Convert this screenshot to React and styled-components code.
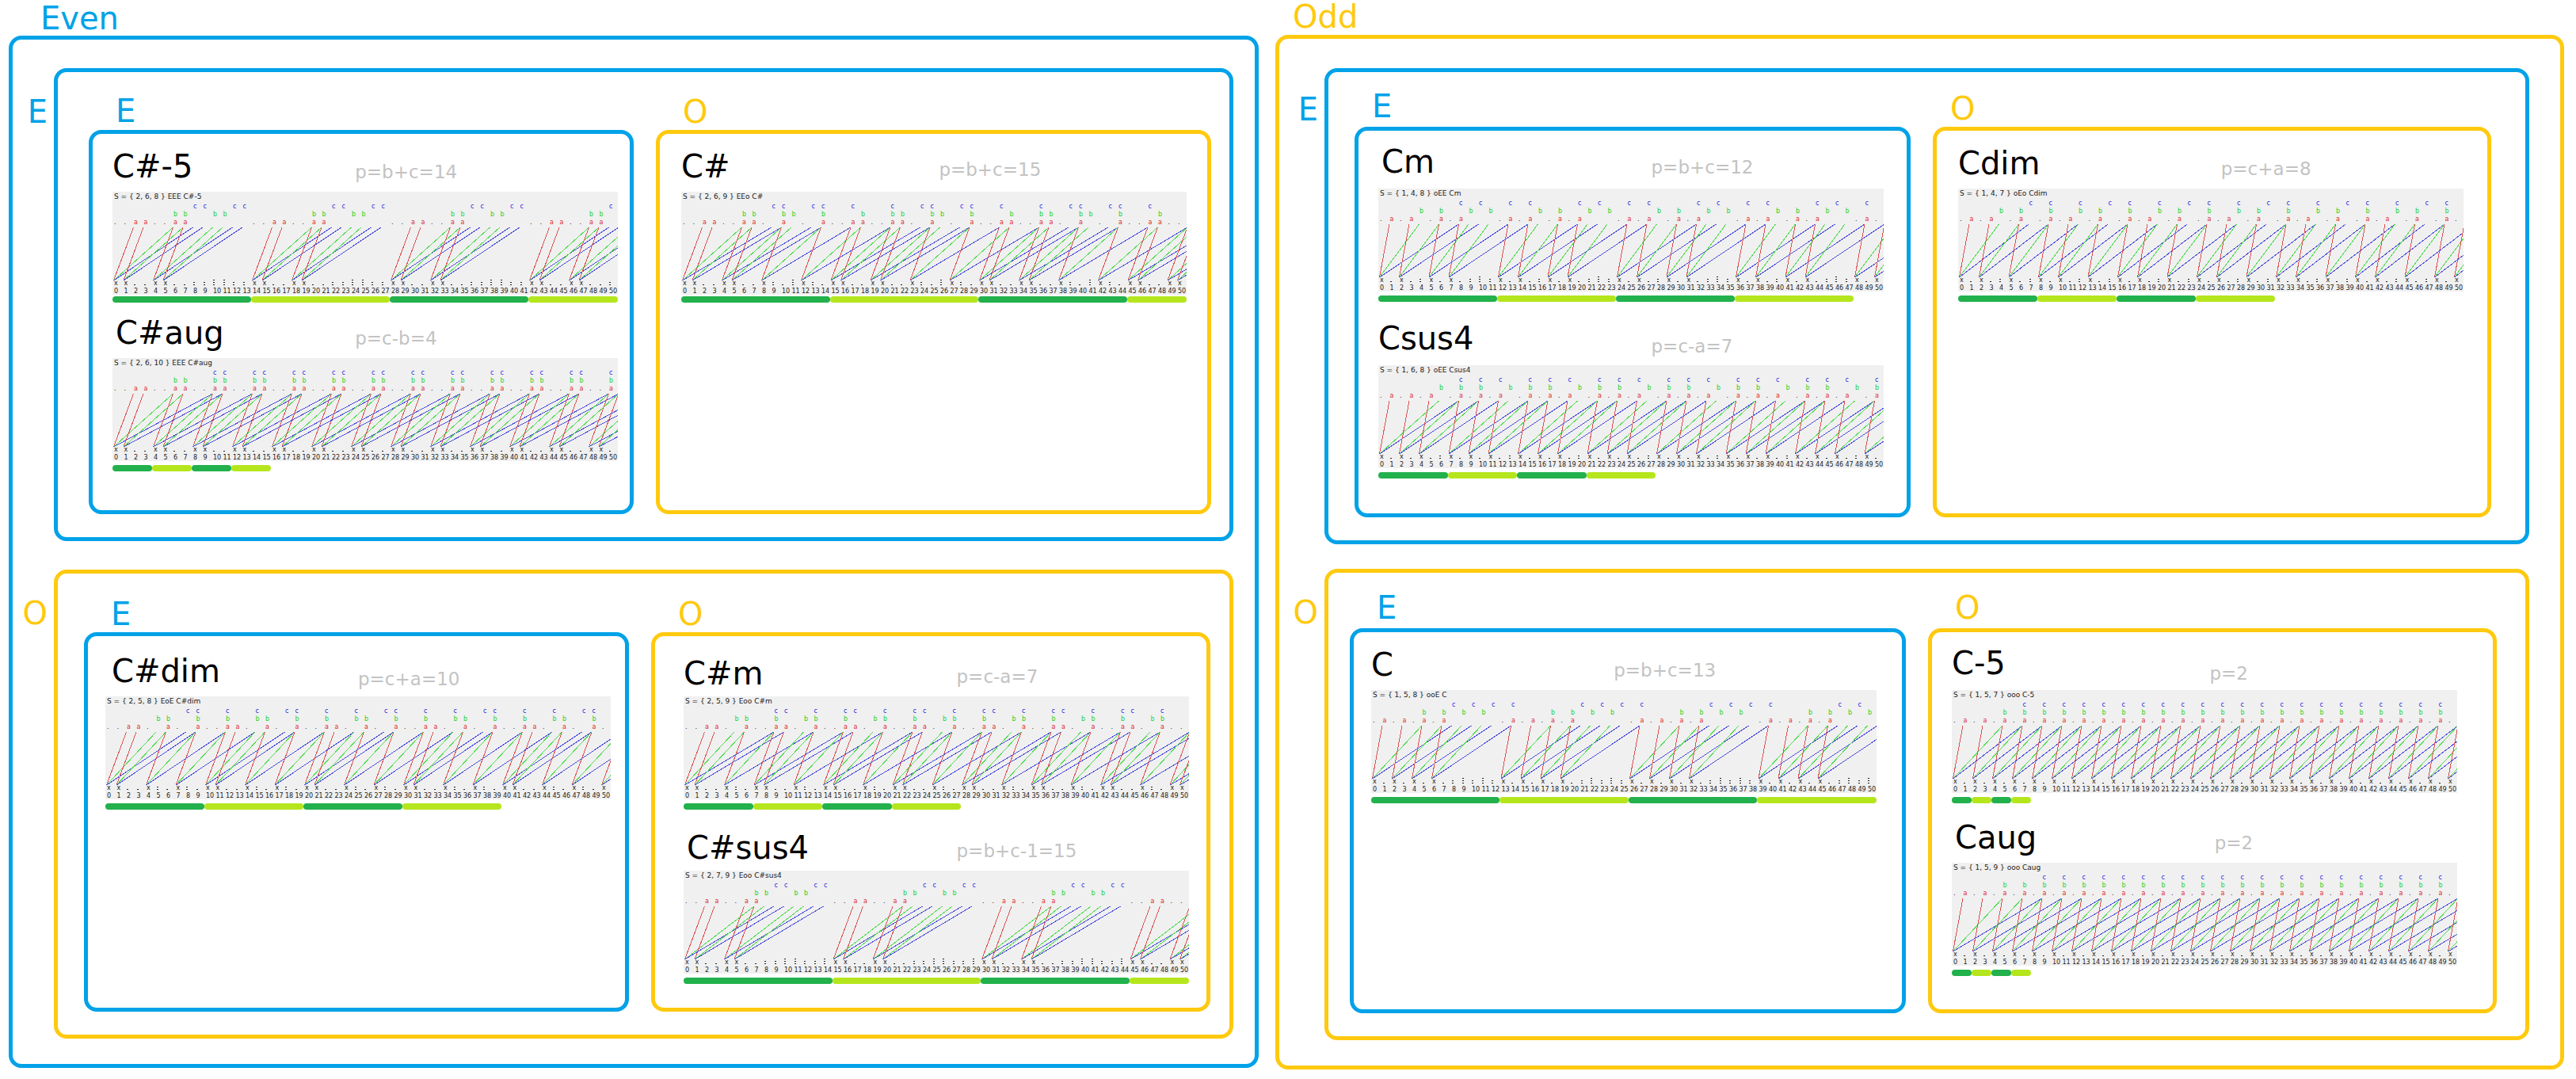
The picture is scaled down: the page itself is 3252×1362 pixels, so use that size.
import React from "react";
import styled, { createGlobalStyle } from "styled-components";

const EVEN = "#00a2e8";
const ODD = "#ffc90e";
const parityColor = (name) => (name.startsWith("E") ? EVEN : ODD);

const PLOT_WIDTH = 638;
const PLOT_HEIGHT = 130;
const PITCH = 12.5;
const LAST = 50;

const GlobalStyle = createGlobalStyle`
  * { box-sizing: border-box; }
  body {
    margin: 0;
    background: #fff;
    color: #000;
    font-family: "DejaVu Sans", Verdana, sans-serif;
  }
`;

const Page = styled.main`
  display: grid;
  grid-template-columns: minmax(0, 1578fr) minmax(0, 1627fr);
  align-items: start;
  gap: 21px;
  padding: 0 15px 0 11px;
`;

const Parity = styled.h2`
  margin: 0;
  font-size: 40px;
  font-weight: 400;
  line-height: 40px;
  color: ${(p) => parityColor(p.children)};
`;

const Column = styled.section`
  display: flex;
  flex-direction: column;
`;

const ColumnHead = styled.header`
  display: flex;
  align-items: flex-end;
  height: ${(p) => p.$height}px;
  padding: 0 0 ${(p) => p.$lift}px ${(p) => p.$indent}px;
`;

const Frame = styled.div`
  border: 5px solid ${(p) => p.$color};
  border-radius: 16px;
`;

const Outer = styled(Frame)`
  display: flex;
  flex-direction: column;
  gap: ${(p) => p.$gap}px;
  padding: ${(p) => p.$top}px ${(p) => p.$right}px 32px 0;
`;

const Group = styled.section`
  display: grid;
  grid-template-columns: ${(p) => p.$side}px minmax(0, 1fr);
`;

const Side = styled.div`
  padding: ${(p) => p.$top}px 8px 0 0;
  text-align: right;
`;

const Panel = styled(Frame)`
  display: grid;
  grid-template-columns: ${(p) => p.$columns};
  gap: 28px;
  padding: 0 ${(p) => p.$right}px 29px ${(p) => p.$left}px;
`;

const Slot = styled.div`
  display: flex;
  flex-direction: column;
`;

const SlotHead = styled.header`
  display: flex;
  align-items: flex-end;
  height: ${(p) => p.$height}px;
  padding: 0 0 ${(p) => p.$lift}px ${(p) => p.$indent}px;
`;

const Card = styled(Frame)`
  flex: 1;
  display: flex;
  flex-direction: column;
  gap: ${(p) => p.$gap}px;
  padding: ${(p) => p.$top}px 8px ${(p) => p.$bottom}px ${(p) => p.$left}px;
`;

const Figure = styled.figure`
  width: 100%;
  max-width: ${PLOT_WIDTH}px;
  margin: 0;
`;

const Caption = styled.figcaption`
  display: grid;
  grid-template-columns: ${(p) => p.$split}% 1fr;
  align-items: end;
  height: 54px;
  white-space: nowrap;
`;

const Chord = styled.h3`
  margin: 0;
  padding: 0 0 ${(p) => p.$drop - 5}px ${(p) => p.$indent}px;
  font-size: 40px;
  font-weight: 400;
  line-height: 40px;
`;

const Formula = styled.span`
  padding-bottom: ${(p) => p.$drop - 4}px;
  font-size: 23px;
  line-height: 24px;
  color: #c3c3c3;
`;

const PlotArea = styled.svg`
  display: block;
  width: 100%;
  height: auto;
  background: #f0f0f0;
  font-family: "DejaVu Sans", Verdana, sans-serif;
  font-size: 8px;
  fill: #202020;
`;

const PlotTitle = styled.text`
  font-size: 9px;
`;

const Periods = styled.div`
  display: flex;
  padding-top: ${(p) => p.$gap}px;
`;

const Period = styled.span`
  flex: none;
  height: 8px;
  border-radius: 4px;
  background: ${(p) => (p.$odd ? "#b5e61d" : "#22b14c")};
`;

const MOVES = [
  { letter: "a", y: 41, color: "#dc5050", ink: "#dc2828" },
  { letter: "b", y: 31, color: "#50dc50", ink: "#28d228" },
  { letter: "c", y: 21, color: "#5050dc", ink: "#2828dc" },
];

// Sprague-Grundy value of every pile size for the given subtraction set.
function grundyValues(set) {
  const values = [];
  for (let n = 0; n <= LAST; n += 1) {
    const seen = set.filter((s) => s <= n).map((s) => values[n - s]);
    let g = 0;
    while (seen.includes(g)) g += 1;
    values.push(g);
  }
  return values;
}

function Plot({ set, code, name }) {
  const values = grundyValues(set);
  const piles = values.map((_, n) => n);
  const zeros = piles.filter((n) => values[n] === 0);
  return (
    <PlotArea viewBox={`0 0 ${PLOT_WIDTH} ${PLOT_HEIGHT}`} role="img" aria-label={name}>
      <PlotTitle x="2" y="9">{`S = { ${set.join(", ")} } ${code} ${name}`}</PlotTitle>
      {zeros.map((n) => (
        <text key={n} x={2 + n * PITCH} y="41">.</text>
      ))}
      {MOVES.map((move, i) =>
        zeros
          .filter((n) => n + set[i] <= LAST)
          .map((n) => (
            <text key={move.letter + n} x={2 + (n + set[i]) * PITCH} y={move.y} fill={move.ink}>
              {move.letter}
            </text>
          ))
      )}
      <g shapeRendering="crispEdges" strokeWidth="1">
        {zeros.map((n) =>
          MOVES.map((move, i) => (
            <line
              key={move.letter + n}
              x1={1.5 + n * PITCH}
              y1="112"
              x2={1.5 + (n + set[i]) * PITCH}
              y2="45"
              stroke={move.color}
            />
          ))
        )}
        {piles.map((n) =>
          Array.from({ length: values[n] }, (_, k) => (
            <rect key={`${n}-${k}`} x={Math.round(2.4 + n * PITCH)} y={117 - 3 * k} width="2" height="1" />
          ))
        )}
      </g>
      {zeros.map((n) => (
        <text key={n} x={2 + n * PITCH} y="118">x</text>
      ))}
      {piles.map((n) => (
        <text key={n} x={2 + n * PITCH} y="128">{n}</text>
      ))}
    </PlotArea>
  );
}

function Chart({ name, formula, set, code, period, split, indent = 0, drop = 17, noteDrop = 17, barGap = 5 }) {
  const cycle = period * PITCH;
  return (
    <Figure>
      <Caption $split={split}>
        <Chord $indent={indent} $drop={drop}>{name}</Chord>
        <Formula $drop={noteDrop}>{formula}</Formula>
      </Caption>
      <Plot set={set} code={code} name={name} />
      <Periods $gap={barGap}>
        {[0, 1, 2, 3].map((k) => {
          const width = Math.min(cycle, PLOT_WIDTH - k * cycle);
          return <Period key={k} $odd={k % 2 === 1} style={{ width: `${(width / PLOT_WIDTH) * 100}%` }} />;
        })}
      </Periods>
    </Figure>
  );
}

const COLUMNS = [
  {
    name: "Even",
    head: { height: 45, lift: 2, indent: 40 },
    outer: { top: 36, right: 27, gap: 36 },
    side: 52,
    groups: [
      {
        name: "E",
        sideTop: 35,
        panel: { columns: "minmax(0, 688fr) minmax(0, 701fr)", left: 39, right: 23 },
        head: 73,
        indent: 34,
        card: { top: 19, gap: 16, bottom: 49 },
        slots: [
          {
            name: "E",
            lift: 4,
            left: 25,
            charts: [
              { name: "C#-5", formula: "p=b+c=14", set: [2, 6, 8], code: "EEE", period: 14, split: 48, barGap: 2 },
              { name: "C#aug", formula: "p=c-b=4", set: [2, 6, 10], code: "EEE", period: 4, split: 48, indent: 4 },
            ],
          },
          {
            name: "O",
            lift: 3,
            left: 27,
            charts: [
              { name: "C#", formula: "p=b+c=15", set: [2, 6, 9], code: "EEo", period: 15, split: 51, noteDrop: 20, barGap: 2 },
            ],
          },
        ],
      },
      {
        name: "O",
        sideTop: 35,
        panel: { columns: "minmax(0, 688fr) minmax(0, 706fr)", left: 33, right: 24 },
        head: 74,
        indent: 34,
        card: { top: 22, gap: 23, bottom: 30 },
        slots: [
          {
            name: "E",
            lift: 3,
            left: 22,
            charts: [
              { name: "C#dim", formula: "p=c+a=10", set: [2, 5, 8], code: "EoE", period: 10, split: 50, indent: 8, noteDrop: 14 },
            ],
          },
          {
            name: "O",
            lift: 3,
            left: 36,
            charts: [
              { name: "C#m", formula: "p=c-a=7", set: [2, 5, 9], code: "Eoo", period: 7, split: 54, drop: 14 },
              { name: "C#sus4", formula: "p=b+c-1=15", set: [2, 7, 9], code: "Eoo", period: 15, split: 54, indent: 4, drop: 14 },
            ],
          },
        ],
      },
    ],
  },
  {
    name: "Odd",
    head: { height: 44, lift: 3, indent: 22 },
    outer: { top: 37, right: 39, gap: 31 },
    side: 57,
    groups: [
      {
        name: "E",
        sideTop: 32,
        panel: { columns: "minmax(0, 702fr) minmax(0, 705fr)", left: 33, right: 43 },
        head: 69,
        indent: 22,
        card: { top: 19, gap: 26, bottom: 44 },
        slots: [
          {
            name: "E",
            lift: 6,
            left: 25,
            charts: [
              { name: "Cm", formula: "p=b+c=12", set: [1, 4, 8], code: "oEE", period: 12, split: 54, indent: 4, drop: 20, noteDrop: 20 },
              { name: "Csus4", formula: "p=c-a=7", set: [1, 6, 8], code: "oEE", period: 7, split: 54, drop: 20 },
            ],
          },
          {
            name: "O",
            lift: 3,
            left: 27,
            charts: [
              { name: "Cdim", formula: "p=c+a=8", set: [1, 4, 7], code: "oEo", period: 8, split: 52 },
            ],
          },
        ],
      },
      {
        name: "O",
        sideTop: 35,
        panel: { columns: "minmax(0, 702fr) minmax(0, 718fr)", left: 27, right: 36 },
        head: 70,
        indent: 34,
        card: { top: 19, gap: 21, bottom: 42 },
        slots: [
          {
            name: "E",
            lift: 6,
            left: 22,
            charts: [
              { name: "C", formula: "p=b+c=13", set: [1, 5, 8], code: "ooE", period: 13, split: 48 },
            ],
          },
          {
            name: "O",
            lift: 6,
            left: 25,
            charts: [
              { name: "C-5", formula: "p=2", set: [1, 5, 7], code: "ooo", period: 2, split: 51, drop: 20, noteDrop: 14 },
              { name: "Caug", formula: "p=2", set: [1, 5, 9], code: "ooo", period: 2, split: 52, indent: 4 },
            ],
          },
        ],
      },
    ],
  },
];

export default function App() {
  return (
    <>
      <GlobalStyle />
      <Page>
        {COLUMNS.map((column) => (
          <Column key={column.name}>
            <ColumnHead $height={column.head.height} $lift={column.head.lift} $indent={column.head.indent}>
              <Parity as="h1">{column.name}</Parity>
            </ColumnHead>
            <Outer
              $color={parityColor(column.name)}
              $top={column.outer.top}
              $right={column.outer.right}
              $gap={column.outer.gap}
            >
              {column.groups.map((group) => (
                <Group key={group.name} $side={column.side}>
                  <Side $top={group.sideTop}>
                    <Parity>{group.name}</Parity>
                  </Side>
                  <Panel
                    $color={parityColor(group.name)}
                    $columns={group.panel.columns}
                    $left={group.panel.left}
                    $right={group.panel.right}
                  >
                    {group.slots.map((slot) => (
                      <Slot key={slot.name}>
                        <SlotHead $height={group.head} $lift={slot.lift} $indent={group.indent}>
                          <Parity>{slot.name}</Parity>
                        </SlotHead>
                        <Card
                          $color={parityColor(slot.name)}
                          $top={group.card.top}
                          $gap={group.card.gap}
                          $bottom={group.card.bottom}
                          $left={slot.left}
                        >
                          {slot.charts.map((chart) => (
                            <Chart key={chart.name} {...chart} />
                          ))}
                        </Card>
                      </Slot>
                    ))}
                  </Panel>
                </Group>
              ))}
            </Outer>
          </Column>
        ))}
      </Page>
    </>
  );
}
